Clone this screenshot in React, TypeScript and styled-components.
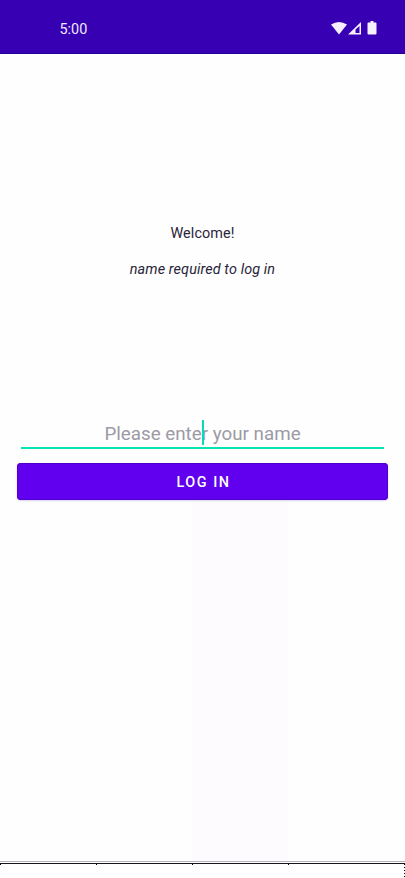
import React from "react";
import styled, { createGlobalStyle } from "styled-components";

const GlobalStyle = createGlobalStyle`
  * { box-sizing: border-box; }
  body { margin: 0; background: #fff; font-family: Roboto, sans-serif; overflow: hidden; }
`;

const Screen = styled.main`
  width: 405px;
  height: 878px;
  display: flex;
  flex-direction: column;
  background: #fefefe;
`;

const StatusBar = styled.header`
  height: 54px;
  flex: none;
  display: flex;
  align-items: flex-start;
  justify-content: space-between;
  padding: 20px 28px 0 59.5px;
  background: #3700b3;
  border-bottom: 1px solid #23008f;
`;

const Clock = styled.time`
  font-size: 14.4px;
  line-height: 20px;
  color: #f1eafd;
`;

const StatusIcons = styled.svg`
  display: block;
  width: 46px;
  height: 14px;
  margin-top: 1px;
`;

const Content = styled.section`
  height: 807px;
  flex: none;
  display: flex;
  flex-direction: column;
  padding: 170px 17px 0;
  background: linear-gradient(#fdfbfe, #fdfbfe) 192px 449px / 96px 358px no-repeat;
`;

const Message = styled.p<{ $italic?: boolean }>`
  margin: 0 0 16px;
  font-size: 14.4px;
  line-height: 20px;
  text-align: center;
  color: #29253a;
  font-style: ${(p) => (p.$italic ? "italic" : "normal")};
  letter-spacing: ${(p) => (p.$italic ? "0.12px" : "0.1px")};
`;

const Field = styled.label`
  position: relative;
  display: block;
  height: 32px;
  margin: 121px 4px 14px;
  border-bottom: 2px solid #08e5b5;
`;

const NameInput = styled.input`
  display: block;
  width: 100%;
  height: 30px;
  padding: 3px 0 0;
  border: 0;
  outline: 0;
  background: transparent;
  font: 18.8px Roboto, sans-serif;
  text-align: center;
  caret-color: transparent;
  &::placeholder { color: #9c9aa5; opacity: 1; }
`;

const Caret = styled.span`
  position: absolute;
  left: 181px;
  top: 3px;
  width: 2px;
  height: 25px;
  background: #08dab5;
`;

const LoginButton = styled.button`
  height: 37px;
  width: 371px;
  flex: none;
  padding: 1px 0 0 2px;
  border: 0;
  border-radius: 4px;
  background: #6000ee;
  box-shadow: inset 0 0 0 1px #5200cd, 0 1px 2px #d9d1ec;
  color: #fff;
  font: 500 14.4px Roboto, sans-serif;
  letter-spacing: 1.5px;
`;

const BottomEdge = styled.svg`
  display: block;
  width: 405px;
  height: 17px;
  background: #fff;
`;

export default function App() {
  return (
    <Screen>
      <GlobalStyle />
      <StatusBar>
        <Clock>5:00</Clock>
        <StatusIcons viewBox="0 0 46 14" fill="#f6f0ff" aria-label="Wi-Fi, signal and battery">
          <path d="M0 3.5Q8-1.5 16 3.5L8 13.5Z" />
          <path fillRule="evenodd" d="M17 13.5 30 1V13.5ZM24.5 8.5V12H28.5V5Z" />
          <path d="M39.5 0h3v1.5h2q1 0 1 1v10q0 1-1 1h-7q-1 0-1-1v-10q0-1 1-1h2Z" />
        </StatusIcons>
      </StatusBar>
      <Content>
        <Message>Welcome!</Message>
        <Message $italic>name required to log in</Message>
        <Field>
          <NameInput placeholder="Please enter your name" aria-label="Name" />
          <Caret />
        </Field>
        <LoginButton type="button">LOG IN</LoginButton>
      </Content>
      <BottomEdge viewBox="0 0 405 17" shapeRendering="crispEdges">
        <path d="M0 .5H405" stroke="#b7b5bb" />
        <path d="M0 2.5H405" stroke="#17151c" />
        <path d="M0 3.5H1M96 3.5H97M192 3.5H193M288 3.5H289" stroke="#000" />
        <path d="M404.5 3V16" stroke="#000" strokeDasharray="1 2" />
      </BottomEdge>
    </Screen>
  );
}
